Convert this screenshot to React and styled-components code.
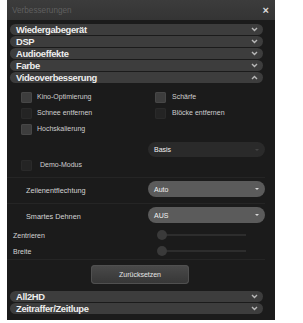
import styled, { createGlobalStyle } from 'styled-components';

/// /////////////////////////////////////////////
// styled
/// /////////////////////////////////////////////

const Global = createGlobalStyle`
  body {
    margin: 0;
    background: #fff;
    font-family: 'Liberation Sans', Arial, sans-serif;
  }
`;

const Panel = styled.div`
  width: 268px;
  height: 320px;
  margin-left: 7px;
  background: #1b1b1b;
  display: flex;
  flex-direction: column;
`;

const TitleBar = styled.div`
  height: 20px;
  flex: none;
  display: flex;
  align-items: center;
  justify-content: space-between;
  padding: 0 6px 0 5px;
  background: linear-gradient(#3c3c3c, #343434);
  color: #5f5f5f;
  font-size: 8.2px;
`;

const Close = styled.span`
  color: #dcdcdc;
  font-size: 11px;
  font-weight: bold;
  line-height: 1;
`;

const Sections = styled.div`
  display: flex;
  flex-direction: column;
  gap: 1px;
  margin: ${p => p.$top}px 12px 0 3px;
`;

const SectionHead = styled.div`
  height: 11px;
  display: flex;
  align-items: center;
  justify-content: space-between;
  padding: 0 5px 0 6px;
  border-radius: 6px;
  background: #3d3d3d;
  color: #ededed;
  font-size: 9.4px;
  font-weight: bold;
  letter-spacing: -0.35px;
  svg {
    width: 7px;
    height: 5px;
  }
`;

const VideoPanel = styled.div`
  margin-right: 10px;
  display: flex;
  flex-direction: column;
`;

const CheckGrid = styled.div`
  display: grid;
  grid-template-columns: 134px 1fr;
  grid-auto-rows: 16px;
  padding: 9px 0 0 14px;
`;

const CheckItem = styled.label`
  display: flex;
  align-items: flex-start;
  gap: ${p => p.$gap || 5}px;
  color: #cfcfcf;
  font-size: 7px;
  line-height: 10px;
`;

const Box = styled.span`
  width: 11px;
  height: 11px;
  flex: none;
  border-radius: 2px;
  background: ${p => (p.$light ? '#3d3d3d' : '#242424')};
  box-shadow: inset 0 0 0 1px ${p => (p.$light ? '#474747' : '#2a2a2a')};
`;

const Select = styled.div`
  width: 117px;
  height: ${p => p.$h || 16}px;
  box-sizing: border-box;
  display: flex;
  align-items: center;
  justify-content: space-between;
  padding: 0 6px;
  border-radius: 8px;
  background: ${p => (p.$dark ? '#2a2a2a' : '#5b5b5b')};
  color: #f2f2f2;
  font-size: 7px;
  &::after {
    content: '';
    border: 2px solid transparent;
    border-top: 2px solid ${p => (p.$dark ? '#444' : '#d8d8d8')};
    border-bottom: none;
  }
`;

const SelectWrap = styled.div`
  display: flex;
  justify-content: flex-end;
  margin-top: ${p => p.$top || 0}px;
`;

const DemoRow = styled.div`
  padding: 3px 0 6px 14px;
`;

const Divider = styled.div`
  height: 1px;
  background: #252525;
`;

const OptionRow = styled.div`
  height: ${p => p.$h}px;
  display: flex;
  align-items: flex-start;
  justify-content: space-between;
  padding-top: 3px;
  box-sizing: border-box;
  color: #d4d4d4;
  font-size: 7.3px;
  > span {
    padding: 5px 0 0 19px;
  }
`;

const SliderRow = styled.div`
  height: 16px;
  display: flex;
  align-items: center;
  justify-content: space-between;
  padding-left: 6px;
  color: #d4d4d4;
  font-size: 7px;
`;

const Slider = styled.div`
  width: 84px;
  height: 2px;
  margin-right: 19px;
  background: #2d2d2d;
  position: relative;
  &::before {
    content: '';
    position: absolute;
    left: -5px;
    top: -4px;
    width: 10px;
    height: 10px;
    border-radius: 50%;
    background: #3a3a3a;
  }
`;

const ButtonRow = styled.div`
  display: flex;
  justify-content: center;
  padding: 5px 0 0 8px;
`;

const Button = styled.div`
  width: 98px;
  height: 19px;
  display: flex;
  align-items: center;
  justify-content: center;
  border-radius: 4px;
  background: linear-gradient(#4a4a4a, #363636);
  box-shadow: inset 0 0 0 1px #505050;
  color: #e6e6e6;
  font-size: 7px;
`;

/// /////////////////////////////////////////////
// component
/// /////////////////////////////////////////////

const Chevron = ({ up }) => (
  <svg viewBox="0 0 7 5">
    <path
      d={up ? 'M1 4 L3.5 1.5 L6 4' : 'M1 1 L3.5 3.5 L6 1'}
      fill="none"
      stroke="#b8b8b8"
      strokeWidth="1.4"
    />
  </svg>
);

const Head = ({ title, up }) => (
  <SectionHead>
    {title}
    <Chevron up={up} />
  </SectionHead>
);

const Check = ({ label, light, gap }) => (
  <CheckItem $gap={gap}>
    <Box $light={light} />
    {label}
  </CheckItem>
);

export default function App() {
  return (
    <>
      <Global />
      <Panel>
        <TitleBar>
          Verbesserungen
          <Close>×</Close>
        </TitleBar>
        <Sections $top={4}>
          <Head title="Wiedergabegerät" />
          <Head title="DSP" />
          <Head title="Audioeffekte" />
          <Head title="Farbe" />
          <Head title="Videoverbesserung" up />
        </Sections>
        <VideoPanel>
          <CheckGrid>
            <Check label="Kino-Optimierung" light />
            <Check label="Schärfe" light gap={6} />
            <Check label="Schnee entfernen" />
            <Check label="Blöcke entfernen" gap={6} />
            <Check label="Hochskalierung" light />
          </CheckGrid>
          <SelectWrap $top={2}>
            <Select $dark $h={15}>Basis</Select>
          </SelectWrap>
          <DemoRow>
            <Check label="Demo-Modus" gap={8} />
          </DemoRow>
          <Divider />
          <OptionRow $h={25}>
            <span>Zeilenentflechtung</span>
            <Select>Auto</Select>
          </OptionRow>
          <Divider />
          <OptionRow $h={23}>
            <span>Smartes Dehnen</span>
            <Select>AUS</Select>
          </OptionRow>
          <SliderRow>
            Zentrieren
            <Slider />
          </SliderRow>
          <SliderRow>
            Breite
            <Slider />
          </SliderRow>
          <Divider />
          <ButtonRow>
            <Button>Zurücksetzen</Button>
          </ButtonRow>
        </VideoPanel>
        <Sections $top={7}>
          <Head title="All2HD" />
          <Head title="Zeitraffer/Zeitlupe" />
        </Sections>
      </Panel>
    </>
  );
}
